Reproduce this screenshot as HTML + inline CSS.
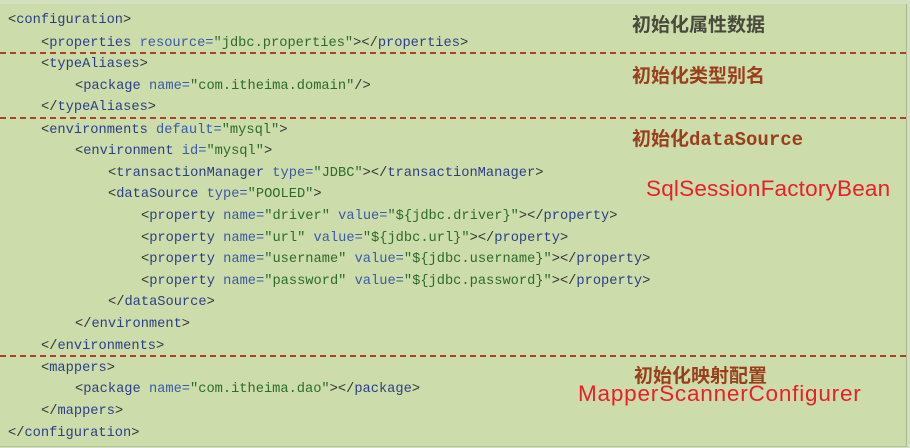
<!DOCTYPE html><html><head><meta charset="utf-8"><style>
body{margin:0;width:910px;height:448px;background:#d3dfbf;overflow:hidden;position:relative;font-family:"Liberation Sans","Noto Sans CJK SC",sans-serif}
#box{position:absolute;left:0;top:4px;width:906px;height:442px;background:#cddcab;border-right:1px solid #aab88e;border-bottom:1px solid #b5c29a}
.l{position:absolute;font-family:"Liberation Mono",monospace;font-size:13.7px;white-space:pre;color:#2b3f86;line-height:16px}
.b{color:#333}.a{color:#3a5ba6}.v{color:#2d6a2d}
.d{position:absolute;left:0;width:906px;height:0;border-top:2px dashed #a8442a}
.c{position:absolute;font-weight:bold;font-size:19px;color:#9a3f1e;white-space:nowrap}
.r{position:absolute;color:#e8202a;font-size:22.5px;white-space:nowrap}
</style></head><body><div id="box"></div>
<div class="l" style="left:8px;top:13px"><span class="b">&lt;</span>configuration<span class="b">&gt;</span></div>
<div class="l" style="left:41px;top:36px"><span class="b">&lt;</span>properties <span class="a">resource=</span><span class="v">"jdbc.properties"</span><span class="b">&gt;&lt;/</span>properties<span class="b">&gt;</span></div>
<div class="d" style="top:52px"></div>
<div class="l" style="left:41px;top:57px"><span class="b">&lt;</span>typeAliases<span class="b">&gt;</span></div>
<div class="l" style="left:75px;top:79px"><span class="b">&lt;</span>package <span class="a">name=</span><span class="v">"com.itheima.domain"</span><span class="b">/&gt;</span></div>
<div class="l" style="left:41px;top:100px"><span class="b">&lt;/</span>typeAliases<span class="b">&gt;</span></div>
<div class="d" style="top:117px"></div>
<div class="l" style="left:41px;top:123px"><span class="b">&lt;</span>environments <span class="a">default=</span><span class="v">"mysql"</span><span class="b">&gt;</span></div>
<div class="l" style="left:75px;top:144px"><span class="b">&lt;</span>environment <span class="a">id=</span><span class="v">"mysql"</span><span class="b">&gt;</span></div>
<div class="l" style="left:108px;top:166px"><span class="b">&lt;</span>transactionManager <span class="a">type=</span><span class="v">"JDBC"</span><span class="b">&gt;&lt;/</span>transactionManager<span class="b">&gt;</span></div>
<div class="l" style="left:108px;top:187px"><span class="b">&lt;</span>dataSource <span class="a">type=</span><span class="v">"POOLED"</span><span class="b">&gt;</span></div>
<div class="l" style="left:141px;top:209px"><span class="b">&lt;</span>property <span class="a">name=</span><span class="v">"driver"</span> <span class="a">value=</span><span class="v">"${jdbc.driver}"</span><span class="b">&gt;&lt;/</span>property<span class="b">&gt;</span></div>
<div class="l" style="left:141px;top:231px"><span class="b">&lt;</span>property <span class="a">name=</span><span class="v">"url"</span> <span class="a">value=</span><span class="v">"${jdbc.url}"</span><span class="b">&gt;&lt;/</span>property<span class="b">&gt;</span></div>
<div class="l" style="left:141px;top:252px"><span class="b">&lt;</span>property <span class="a">name=</span><span class="v">"username"</span> <span class="a">value=</span><span class="v">"${jdbc.username}"</span><span class="b">&gt;&lt;/</span>property<span class="b">&gt;</span></div>
<div class="l" style="left:141px;top:274px"><span class="b">&lt;</span>property <span class="a">name=</span><span class="v">"password"</span> <span class="a">value=</span><span class="v">"${jdbc.password}"</span><span class="b">&gt;&lt;/</span>property<span class="b">&gt;</span></div>
<div class="l" style="left:108px;top:295px"><span class="b">&lt;/</span>dataSource<span class="b">&gt;</span></div>
<div class="l" style="left:75px;top:317px"><span class="b">&lt;/</span>environment<span class="b">&gt;</span></div>
<div class="l" style="left:41px;top:339px"><span class="b">&lt;/</span>environments<span class="b">&gt;</span></div>
<div class="d" style="top:355px"></div>
<div class="l" style="left:41px;top:361px"><span class="b">&lt;</span>mappers<span class="b">&gt;</span></div>
<div class="l" style="left:75px;top:382px"><span class="b">&lt;</span>package <span class="a">name=</span><span class="v">"com.itheima.dao"</span><span class="b">&gt;&lt;/</span>package<span class="b">&gt;</span></div>
<div class="l" style="left:41px;top:404px"><span class="b">&lt;/</span>mappers<span class="b">&gt;</span></div>
<div class="l" style="left:8px;top:426px"><span class="b">&lt;/</span>configuration<span class="b">&gt;</span></div>
<div class="c" style="left:632px;top:10px;color:#474a3c">初始化属性数据</div>
<div class="c" style="left:632px;top:61px">初始化类型别名</div>
<div class="c" style="left:632px;top:124px">初始化<span style="font-family:'Liberation Mono',monospace;font-size:19px">dataSource</span></div>
<div class="r" style="left:646px;top:176px;letter-spacing:0.2px">SqlSessionFactoryBean</div>
<div class="c" style="left:634px;top:361px">初始化映射配置</div>
<div class="r" style="left:578px;top:381px;letter-spacing:0.8px">MapperScannerConfigurer</div>
</body></html>
